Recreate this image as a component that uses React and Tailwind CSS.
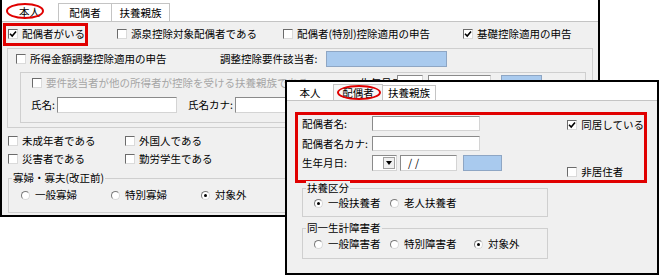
import React from 'react';

const RED = 'border-[#e00000]';

function CheckMark() {
    return (
        <svg width="8" height="8" viewBox="0 0 8 8">
            <path d="M1 3.8 L3.2 6 L7 1.6" fill="none" stroke="#000" strokeWidth="1.6" />
        </svg>
    );
}

function Check({ checked, disabled, children, className = '' }) {
    return (
        <div className={`flex items-center h-[16px] gap-[4px] ${className}`}>
            <span className="w-[10px] h-[10px] shrink-0 bg-white border border-t-[#6b6b6b] border-l-[#6b6b6b] border-r-[#dadada] border-b-[#dadada] flex items-center justify-center">
                {checked && <CheckMark />}
            </span>
            <span className={`whitespace-nowrap ${disabled ? 'text-[#a6a6a6]' : ''}`}>{children}</span>
        </div>
    );
}

function Radio({ checked, children, className = '' }) {
    return (
        <div className={`flex items-center h-[16px] gap-[5px] ${className}`}>
            <span className="w-[9px] h-[9px] shrink-0 rounded-full bg-white border border-t-[#7a7a7a] border-l-[#7a7a7a] border-r-[#d8d8d8] border-b-[#d8d8d8] flex items-center justify-center">
                {checked && <span className="w-[3px] h-[3px] rounded-full bg-black" />}
            </span>
            <span className="whitespace-nowrap">{children}</span>
        </div>
    );
}

function Field({ className = '', children }) {
    return (
        <div className={`bg-white border border-t-[#8a8a8a] border-l-[#8a8a8a] border-r-[#d4d4d4] border-b-[#d4d4d4] flex items-center shrink-0 ${className}`}>
            {children}
        </div>
    );
}

function Blue({ className = '' }) {
    return <div className={`bg-[#a9caee] border border-[#8ea6c4] shrink-0 ${className}`} />;
}

function Group({ label, className = '', children }) {
    return (
        <div className={`relative border border-[#cfcfcf] ${className}`}>
            <span className="absolute -top-[8px] left-[3px] px-[1px] bg-[#f0f0f0] leading-[14px] whitespace-nowrap">{label}</span>
            {children}
        </div>
    );
}

export default function App() {
    return (
        <div className="relative w-[661px] h-[276px] bg-white overflow-hidden text-[10.5px] leading-[14px] text-black font-['Noto_Sans_CJK_JP',sans-serif]">

            {/* 本人 tab window */}
            <div className="absolute left-0 top-0 w-[600px] h-[217px] border-l-2 border-r-2 border-b-2 border-black flex flex-col">
                <div className="h-[21px] bg-white flex items-end pl-[1px] shrink-0">
                    <div className="relative w-[55px] h-[19px] pl-[16px] flex items-center">
                        本人
                        <span className={`absolute left-[3px] top-[1px] w-[38px] h-[16px] border-2 ${RED} rounded-[50%]`} />
                    </div>
                    <div className="w-[54px] h-[18px] border-l border-r border-t border-[#c4c4c4] flex items-center justify-center">配偶者</div>
                    <div className="w-[58px] h-[18px] border-r border-t border-[#c4c4c4] flex items-center justify-center">扶養親族</div>
                </div>

                <div className="flex-1 bg-[#f0f0f0] border-t border-[#c4c4c4] flex flex-col">
                    {/* row 1 */}
                    <div className="relative flex mt-[4px] pl-[6px]">
                        <Check checked className="w-[109px]">配偶者がいる</Check>
                        <Check className="w-[166px]">源泉控除対象配偶者である</Check>
                        <Check className="w-[180px]">配偶者(特別)控除適用の申告</Check>
                        <Check checked>基礎控除適用の申告</Check>
                        <span className={`absolute left-[1px] -top-[3px] w-[85px] h-[23px] border-[3px] ${RED}`} />
                    </div>

                    {/* 所得金額調整控除 */}
                    <div className="ml-[5px] mt-[6px] w-[586px] h-[80px] border border-[#cfcfcf] flex flex-col">
                        <div className="flex items-center mt-[2px] pl-[8px]">
                            <Check className="w-[204px]">所得金額調整控除適用の申告</Check>
                            <span className="w-[106px] whitespace-nowrap">調整控除要件該当者:</span>
                            <Blue className="w-[121px] h-[16px]" />
                        </div>
                        <div className="ml-[12px] mt-[5px] w-[566px] h-[51px] border border-[#cfcfcf] flex flex-col">
                            <div className="flex items-center mt-[2px] pl-[11px]">
                                <Check disabled className="w-[328px]">要件該当者が他の所得者が控除を受ける扶養親族である</Check>
                                <span className="w-[37px] whitespace-nowrap">生年月日:</span>
                                <Field className="w-[26px] h-[16px]" />
                                <Field className="ml-[5px] w-[63px] h-[16px]" />
                                <Blue className="ml-[10px] w-[41px] h-[16px]" />
                            </div>
                            <div className="flex items-center mt-[6px] pl-[10px]">
                                <span className="w-[26px] whitespace-nowrap">氏名:</span>
                                <Field className="w-[120px] h-[16px]" />
                                <span className="ml-[11px] w-[47px] whitespace-nowrap">氏名カナ:</span>
                                <Field className="w-[130px] h-[16px]" />
                            </div>
                        </div>
                    </div>

                    <div className="flex mt-[5px] pl-[6px]">
                        <Check className="w-[117px]">未成年者である</Check>
                        <Check>外国人である</Check>
                    </div>
                    <div className="flex mt-[2px] pl-[6px]">
                        <Check className="w-[117px]">災害者である</Check>
                        <Check>勤労学生である</Check>
                    </div>

                    <Group label="寡婦・寡夫(改正前)" className="ml-[6px] mt-[11px] w-[560px] h-[35px]">
                        <div className="flex mt-[8px] pl-[12px]">
                            <Radio className="w-[90px]">一般寡婦</Radio>
                            <Radio className="w-[90px]">特別寡婦</Radio>
                            <Radio checked>対象外</Radio>
                        </div>
                    </Group>
                </div>
            </div>

            {/* 配偶者 tab window */}
            <div className="absolute left-[285px] top-[80px] w-[374px] h-[195px] border-2 border-black bg-white flex flex-col">
                <div className="h-[18px] flex items-end shrink-0">
                    <div className="w-[46px] h-[15px] flex items-center justify-center">本人</div>
                    <div className="relative w-[50px] h-[16px] border-l border-r border-t border-[#c4c4c4] bg-[#f7f7f7] flex items-center justify-center">
                        配偶者
                        <span className={`absolute left-[3px] top-[0px] w-[44px] h-[15px] border-[2.5px] ${RED} rounded-[50%]`} />
                    </div>
                    <div className="w-[53px] h-[15px] border-r border-t border-[#c4c4c4] flex items-center justify-center">扶養親族</div>
                </div>

                <div className="flex-1 bg-[#f0f0f0] border-t border-[#c4c4c4] flex flex-col">
                    <div className={`ml-[8px] mt-[11px] w-[352px] h-[71px] border-[3px] ${RED} flex`}>
                        <div className="w-[274px] flex flex-col pl-[4px]">
                            <div className="flex items-center mt-[1px]">
                                <span className="w-[70px]">配偶者名:</span>
                                <Field className="w-[108px] h-[15px]" />
                            </div>
                            <div className="flex items-center mt-[5px]">
                                <span className="w-[70px] whitespace-nowrap">配偶者名カナ:</span>
                                <Field className="w-[108px] h-[15px]" />
                            </div>
                            <div className="flex items-center mt-[4px]">
                                <span className="w-[70px]">生年月日:</span>
                                <Field className="w-[25px] h-[16px] justify-end">
                                    <span className="w-[12px] h-[12px] mr-[1px] bg-[#f0f0f0] border border-[#a0a0a0] flex items-center justify-center">
                                        <svg width="6" height="4" viewBox="0 0 6 4"><path d="M0 0 H6 L3 4 Z" fill="#000" /></svg>
                                    </span>
                                </Field>
                                <Field className="ml-[3px] w-[57px] h-[16px] pl-[7px]">
                                    <span className="tracking-[3px]">//</span>
                                </Field>
                                <Blue className="ml-[6px] w-[39px] h-[16px]" />
                            </div>
                        </div>
                        <div className="flex flex-col justify-between pt-[2px]">
                            <Check checked>同居している</Check>
                            <Check>非居住者</Check>
                        </div>
                    </div>

                    <Group label="扶養区分" className="ml-[15px] mt-[5px] w-[246px] h-[29px]">
                        <div className="flex mt-[6px] pl-[11px]">
                            <Radio checked className="w-[76px]">一般扶養者</Radio>
                            <Radio>老人扶養者</Radio>
                        </div>
                    </Group>

                    <Group label="同一生計障害者" className="ml-[15px] mt-[11px] w-[246px] h-[31px]">
                        <div className="flex mt-[7px] pl-[11px]">
                            <Radio className="w-[76px]">一般障害者</Radio>
                            <Radio className="w-[84px]">特別障害者</Radio>
                            <Radio checked>対象外</Radio>
                        </div>
                    </Group>
                </div>
            </div>
        </div>
    );
}
